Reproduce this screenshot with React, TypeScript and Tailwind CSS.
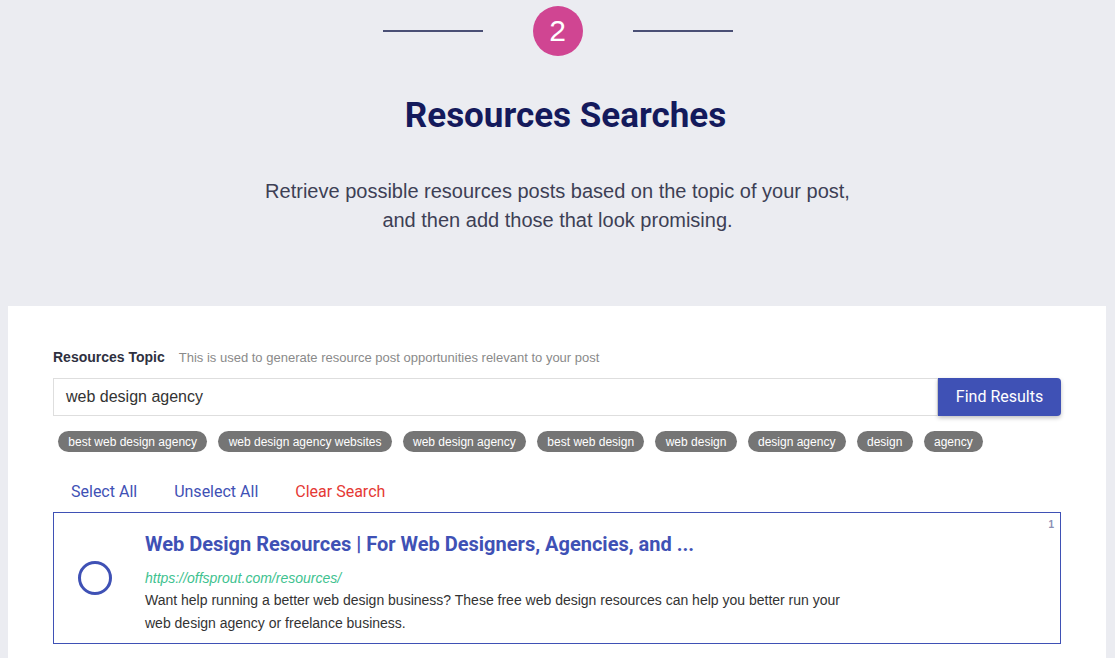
import React from "react";

const chips = [
  "best web design agency",
  "web design agency websites",
  "web design agency",
  "best web design",
  "web design",
  "design agency",
  "design",
  "agency",
];

export default function App() {
  return (
    <div className="w-[1115px] h-[658px] overflow-hidden bg-[#ebecf1]" style={{ fontFamily: "'Liberation Sans', Arial, sans-serif" }}>
      <div className="flex items-center justify-center pt-[6px] gap-[50px]">
        <div className="w-[100px] h-[2px] bg-[#4a4f75]" />
        <div className="w-[50px] h-[50px] rounded-full bg-[#d04592] flex items-center justify-center text-white text-[30px] leading-none">
          2
        </div>
        <div className="w-[100px] h-[2px] bg-[#4a4f75]" />
      </div>
      <h1 className="text-center text-[35px] font-bold text-[#141a5c] mt-[40px] leading-[40px] pl-[16px]" style={{ fontFamily: "Roboto, sans-serif" }}>
        Resources Searches
      </h1>
      <p className="text-center text-[20px] leading-[29px] text-[#3d3f55] mt-[41px]">
        Retrieve possible resources posts based on the topic of your post,
        <br />
        and then add those that look promising.
      </p>
      <div className="flex mt-[71px]">
        <div className="ml-[8px] w-[1098px] h-[400px] bg-white pt-[43px] px-[45px]">
          <div className="flex items-baseline gap-[14px] leading-[16px]">
            <span className="text-[14px] font-bold text-[#2e3040]">Resources Topic</span>
            <span className="text-[13px] text-[#8a8a8a]">This is used to generate resource post opportunities relevant to your post</span>
          </div>
          <div className="flex mt-[12px] w-[1008px]">
            <div className="flex-1 h-[38px] border border-[#dedede] flex items-center pl-[12px] text-[16px] text-[#333]">
              web design agency
            </div>
            <button className="w-[123px] h-[38px] bg-[#3f51b5] text-white text-[16px] rounded-r-[4px] shadow-[0_2px_4px_rgba(0,0,0,0.25)]" style={{ fontFamily: "Roboto, sans-serif" }}>
              Find Results
            </button>
          </div>
          <div className="flex gap-[11px] mt-[15px] pl-[5px]">
            {chips.map((c) => (
              <span key={c} className="h-[21px] px-[10.3px] rounded-full bg-[#757575] text-white text-[12px] flex items-center">
                {c}
              </span>
            ))}
          </div>
          <div className="flex gap-[37px] mt-[30px] pl-[18px] text-[16px] leading-[20px]" style={{ fontFamily: "Roboto, sans-serif" }}>
            <span className="text-[#3f51b5]">Select All</span>
            <span className="text-[#3f51b5]">Unselect All</span>
            <span className="text-[#e53935]">Clear Search</span>
          </div>
          <div className="relative mt-[10px] w-[1008px] h-[132px] border border-[#3f51b5] flex items-start">
            <span className="absolute top-[4px] right-[6px] text-[10px] font-bold text-[#8a8fb5]">1</span>
            <div className="w-[91px] flex justify-start pl-[24px] pt-[48px]">
              <div className="w-[34px] h-[34px] rounded-full border-[3px] border-[#3f51b5]" />
            </div>
            <div className="flex flex-col pt-[19px]">
              <div className="text-[20px] font-bold text-[#3f51b5] leading-[24px]" style={{ fontFamily: "Roboto, sans-serif" }}>
                Web Design Resources | For Web Designers, Agencies, and ...
              </div>
              <div className="text-[14px] italic text-[#3ec28f] mt-[14px] leading-[16px]">https://offsprout.com/resources/</div>
              <div className="text-[14px] text-[#333] leading-[23px] mt-[3px] w-[720px]">
                Want help running a better web design business? These free web design resources can help you better run your web design agency or freelance business.
              </div>
            </div>
          </div>
        </div>
      </div>
    </div>
  );
}
